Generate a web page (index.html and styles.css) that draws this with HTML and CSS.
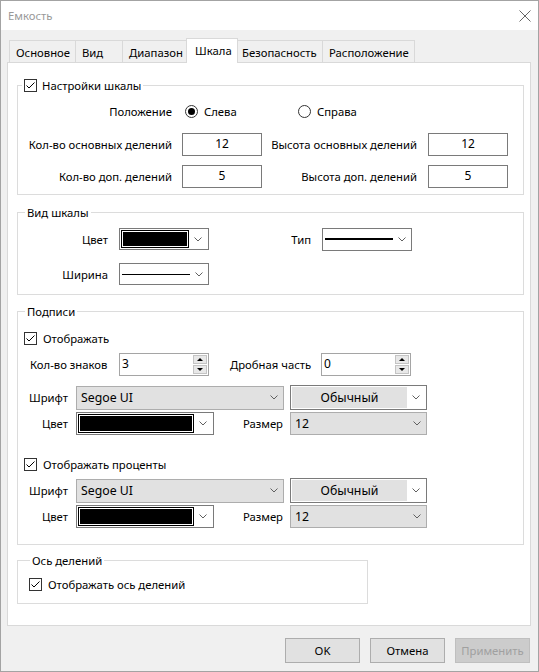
FILE: index.html
```html
<!DOCTYPE html>
<html>
<head>
<meta charset="utf-8">
<title>Емкость</title>
<link rel="stylesheet" href="styles.css">
</head>
<body>
<div class="window">
  <div class="titlebar">
    <span class="title">Емкость</span>
    <svg class="close" width="12" height="12" viewBox="0 0 12 12"><path d="M0.5 0.5 L11.5 11.5 M11.5 0.5 L0.5 11.5"/></svg>
  </div>

  <div class="client">
    <div class="tabs">
      <div class="tab t-main">Основное</div>
      <div class="tab t-view">Вид</div>
      <div class="tab t-range">Диапазон</div>
      <div class="tab t-scale active">Шкала</div>
      <div class="tab t-safety">Безопасность</div>
      <div class="tab t-place">Расположение</div>
    </div>

    <div class="panel">

      <!-- scale settings -->
      <fieldset class="group g1">
        <legend class="legend-check">
          <span class="check"><svg width="11" height="11" viewBox="0 0 11 11"><path d="M1.5 5.5 L4 8 L9.5 2.5"/></svg></span>Настройки шкалы
        </legend>
        <div class="row r-pos">
          <span class="lbl g1-a">Положение</span>
          <span class="radio-item ri-first"><span class="radio on"></span>Слева</span>
          <span class="radio-item"><span class="radio"></span>Справа</span>
        </div>
        <div class="row r-main">
          <span class="lbl g1-a">Кол-во основных делений</span>
          <span class="edit">12</span>
          <span class="lbl g1-b">Высота основных делений</span>
          <span class="edit">12</span>
        </div>
        <div class="row r-minor">
          <span class="lbl g1-a">Кол-во доп. делений</span>
          <span class="edit">5</span>
          <span class="lbl g1-b">Высота доп. делений</span>
          <span class="edit">5</span>
        </div>
      </fieldset>

      <!-- scale look -->
      <fieldset class="group g2">
        <legend>Вид шкалы</legend>
        <div class="row r-color">
          <span class="lbl g2-a">Цвет</span>
          <span class="combo c-color"><span class="swatch"></span><span class="arrow"><svg width="8" height="5" viewBox="0 0 8 5"><path d="M0.5 0.5 L4 4 L7.5 0.5"/></svg></span></span>
          <span class="lbl g2-b">Тип</span>
          <span class="combo c-line c-type"><span class="line thick"></span><span class="arrow"><svg width="8" height="5" viewBox="0 0 8 5"><path d="M0.5 0.5 L4 4 L7.5 0.5"/></svg></span></span>
        </div>
        <div class="row r-width">
          <span class="lbl g2-a">Ширина</span>
          <span class="combo c-line"><span class="line"></span><span class="arrow"><svg width="8" height="5" viewBox="0 0 8 5"><path d="M0.5 0.5 L4 4 L7.5 0.5"/></svg></span></span>
        </div>
      </fieldset>

      <!-- captions -->
      <fieldset class="group g3">
        <legend>Подписи</legend>
        <div class="check-row cr-first">
          <span class="check"><svg width="11" height="11" viewBox="0 0 11 11"><path d="M1.5 5.5 L4 8 L9.5 2.5"/></svg></span>Отображать
        </div>
        <div class="row r-spin">
          <span class="lbl g3-count">Кол-во знаков</span>
          <span class="spin"><span class="spin-val">3</span><span class="spin-btns"><span class="spin-btn"><i class="tri up"></i></span><span class="spin-btn"><i class="tri down"></i></span></span></span>
          <span class="lbl g3-frac">Дробная часть</span>
          <span class="spin"><span class="spin-val">0</span><span class="spin-btns"><span class="spin-btn"><i class="tri up"></i></span><span class="spin-btn"><i class="tri down"></i></span></span></span>
        </div>
        <div class="row r-font">
          <span class="lbl g3-a">Шрифт</span>
          <span class="combo c-gray c-font"><span class="val">Segoe UI</span><span class="arrow"><svg width="8" height="5" viewBox="0 0 8 5"><path d="M0.5 0.5 L4 4 L7.5 0.5"/></svg></span></span>
          <span class="combo c-style"><span class="sel">Обычный</span><span class="arrow"><svg width="8" height="5" viewBox="0 0 8 5"><path d="M0.5 0.5 L4 4 L7.5 0.5"/></svg></span></span>
        </div>
        <div class="row r-fcolor">
          <span class="lbl g3-a">Цвет</span>
          <span class="combo c-color c-wide"><span class="swatch"></span><span class="arrow"><svg width="8" height="5" viewBox="0 0 8 5"><path d="M0.5 0.5 L4 4 L7.5 0.5"/></svg></span></span>
          <span class="lbl g3-size">Размер</span>
          <span class="combo c-gray c-size"><span class="val">12</span><span class="arrow"><svg width="8" height="5" viewBox="0 0 8 5"><path d="M0.5 0.5 L4 4 L7.5 0.5"/></svg></span></span>
        </div>

        <div class="check-row cr-second">
          <span class="check"><svg width="11" height="11" viewBox="0 0 11 11"><path d="M1.5 5.5 L4 8 L9.5 2.5"/></svg></span>Отображать проценты
        </div>
        <div class="row r-font r-font2">
          <span class="lbl g3-a">Шрифт</span>
          <span class="combo c-gray c-font"><span class="val">Segoe UI</span><span class="arrow"><svg width="8" height="5" viewBox="0 0 8 5"><path d="M0.5 0.5 L4 4 L7.5 0.5"/></svg></span></span>
          <span class="combo c-style"><span class="sel">Обычный</span><span class="arrow"><svg width="8" height="5" viewBox="0 0 8 5"><path d="M0.5 0.5 L4 4 L7.5 0.5"/></svg></span></span>
        </div>
        <div class="row r-fcolor">
          <span class="lbl g3-a">Цвет</span>
          <span class="combo c-color c-wide"><span class="swatch"></span><span class="arrow"><svg width="8" height="5" viewBox="0 0 8 5"><path d="M0.5 0.5 L4 4 L7.5 0.5"/></svg></span></span>
          <span class="lbl g3-size">Размер</span>
          <span class="combo c-gray c-size"><span class="val">12</span><span class="arrow"><svg width="8" height="5" viewBox="0 0 8 5"><path d="M0.5 0.5 L4 4 L7.5 0.5"/></svg></span></span>
        </div>
      </fieldset>

      <!-- axis -->
      <fieldset class="group g4">
        <legend>Ось делений</legend>
        <div class="check-row">
          <span class="check"><svg width="11" height="11" viewBox="0 0 11 11"><path d="M1.5 5.5 L4 8 L9.5 2.5"/></svg></span>Отображать ось делений
        </div>
      </fieldset>
    </div>

    <div class="buttons">
      <span class="btn">OK</span>
      <span class="btn">Отмена</span>
      <span class="btn disabled">Применить</span>
    </div>
  </div>
</div>
</body>
</html>
```

FILE: styles.css
```css
* {box-sizing: border-box;}

body {
  margin: 0;
  font-family: "Noto Sans", "Liberation Sans", sans-serif;
  font-size: 11.3px;
  line-height: 15px;
  color: #000;
  background: #fff;
}

/* window frame */
.window {
  width: 539px;
  height: 672px;
  border: 1px solid #a3a3a3;
  display: flex;
  flex-direction: column;
}

.titlebar {
  height: 29px;
  flex: none;
  background: #fff;
  display: flex;
  align-items: center;
  justify-content: space-between;
  padding: 0 7px 0 7px;
}
.title {color: #999;}
.close path {stroke: #666; stroke-width: 1; fill: none;}

.client {
  flex: 1;
  background: #f0f0f0;
}

/* tab strip */
.tabs {
  display: flex;
  align-items: flex-end;
  padding: 8px 0 0 8px;
  height: 32px;
}
.tab {
  height: 22px;
  padding: 4px 0 0 6px;
  border-top: 1px solid #d9d9d9;
  border-left: 1px solid #d9d9d9;
  background: #f0f0f0;
  white-space: nowrap;
}
.t-main {width: 66px;}
.t-view {width: 47px;}
.t-range {width: 66px;}
.t-safety {width: 87px;}
.t-place {width: 93px; border-right: 1px solid #d9d9d9;}

.tab.active {
  position: relative;
  z-index: 1;
  width: 52px;
  height: 25px;
  margin: 0 -3px -1px -2px;
  padding-left: 8px;
  background: #fff;
  border-right: 1px solid #d9d9d9;
}

/* tab page */
.panel {
  height: 564px;
  margin-left: 6px;
  width: 524px;
  background: #fff;
  border: 1px solid #d9d9d9;
  padding-top: 15px;
}

.group {
  margin: 0 6px 0 9px;
  padding: 0;
  border: 1px solid #dcdcdc;
  min-width: 0;
}
.group legend {
  height: 15px;
  line-height: 15px;
  padding: 0 2px;
  margin-left: 7px;
}
.group legend.legend-check {
  display: flex;
  align-items: center;
  margin-left: 4px;
}
.legend-check .check {margin-right: 5px;}

.g1 {padding: 7px 0 6px 0;}
.g2 {margin-top: 10px; padding: 7px 0 9px 0;}
.g3 {margin-top: 9px; padding: 12px 0 16px 0;}
.g4 {margin-top: 8px; padding: 9px 0 11px 5px; width: 351px;}

.row {display: flex; align-items: center;}
.lbl {flex: none; white-space: nowrap;}

/* group 1 */
.r-pos {height: 22px;}
.r-main {height: 23px; margin-top: 11px;}
.r-minor {height: 23px; margin-top: 9px;}
.g1-a {width: 164px; padding-right: 10px; text-align: right;}
.g1-b {width: 166px; padding-right: 11px; text-align: right;}

.radio-item {display: flex; align-items: center; width: 113px;}
.ri-first {margin-left: 3px;}
.radio {
  width: 13px;
  height: 13px;
  border: 1px solid #333;
  border-radius: 50%;
  margin-right: 6px;
  display: flex;
  align-items: center;
  justify-content: center;
  background: #fff;
}
.radio.on::after {
  content: "";
  width: 7px;
  height: 7px;
  border-radius: 50%;
  background: #000;
}

.edit {
  flex: none;
  width: 80px;
  height: 23px;
  border: 1px solid #7a7a7a;
  background: #fff;
  text-align: center;
  line-height: 20px;
  font-size: 12px;
}

/* checkboxes */
.check {
  flex: none;
  width: 13px;
  height: 13px;
  border: 1px solid #333;
  background: #fff;
  display: flex;
  align-items: center;
  justify-content: center;
}
.check path {stroke: #000; stroke-width: 1; fill: none;}
.check-row {display: flex; align-items: center; height: 15px; padding-left: 6px;}
.check-row .check {margin-right: 6px;}
.cr-second {margin-top: 22px;}

/* group 2 */
.r-color {height: 24px;}
.r-width {height: 22px; margin-top: 12px;}
.g2-a {width: 101px; padding-right: 11px; text-align: right;}
.g2-b {width: 113px; padding-right: 11px; text-align: right;}

/* combo boxes */
.combo {
  flex: none;
  display: flex;
  align-items: center;
  width: 90px;
  height: 22px;
  border: 1px solid #7a7a7a;
  background: #fff;
}
.combo .arrow {
  flex: none;
  width: 18px;
  display: flex;
  align-items: center;
  justify-content: center;
  margin-left: auto;
}
.arrow path {stroke: #606060; stroke-width: 1; fill: none;}

.c-color {padding: 1px;}
.swatch {
  flex: 1;
  height: 100%;
  background: #000;
  border: 1px solid #000;
  box-shadow: inset 0 0 0 1px #fff;
}
.c-wide {width: 138px; height: 23px;}

.c-line {padding-left: 2px;}
.c-type {height: 23px;}
.line {flex: 1; height: 1px; background: #000;}
.line.thick {height: 2px;}

.c-gray {
  background: #e1e1e1;
  border-color: #adadad;
  font-size: 12.3px;
}
.c-gray .val {padding-left: 4px;}
.c-font {width: 208px; height: 24px;}
.c-size {width: 137px; height: 23px;}

.c-style {
  width: 137px;
  height: 25px;
  margin-left: 6px;
  padding: 1px;
  font-size: 12.3px;
}
.c-style .sel {
  flex: 1;
  height: 100%;
  background: #e1e1e1;
  text-align: center;
  line-height: 21px;
}

/* group 3 */
.r-spin {height: 23px; margin-top: 7px;}
.r-font {height: 25px; margin-top: 9px;}
.r-font2 {margin-top: 6px;}
.r-fcolor {height: 23px; margin-top: 2px;}
.g3-count {width: 101px; padding-left: 12px;}
.g3-frac {width: 112px; padding-left: 21px;}
.g3-a {width: 58px; padding-right: 8px; text-align: right;}
.g3-size {width: 76px; padding-right: 7px; text-align: right;}

.spin {
  flex: none;
  display: flex;
  width: 90px;
  height: 23px;
  border: 1px solid #a5a5a5;
  background: #fff;
}
.spin-val {padding-left: 2px; line-height: 20px; font-size: 12px;}
.spin-btns {
  margin-left: auto;
  width: 16px;
  display: flex;
  flex-direction: column;
  gap: 1px;
  padding: 1px;
}
.spin-btn {
  flex: 1;
  background: #e8e8e8;
  border: 1px solid #c4c4c4;
  display: flex;
  align-items: center;
  justify-content: center;
}
.tri {
  width: 0;
  height: 0;
  border-left: 3px solid transparent;
  border-right: 3px solid transparent;
}
.tri.up {border-bottom: 3px solid #000;}
.tri.down {border-top: 3px solid #000;}

/* dialog buttons */
.buttons {
  display: flex;
  justify-content: flex-end;
  gap: 10px;
  margin-top: 12px;
  padding-right: 8px;
}
.btn {
  width: 75px;
  height: 25px;
  line-height: 23px;
  text-align: center;
  background: #e1e1e1;
  border: 1px solid #adadad;
}
.btn.disabled {
  background: #cccccc;
  border-color: #bfbfbf;
  color: #a0a0a0;
}
```
